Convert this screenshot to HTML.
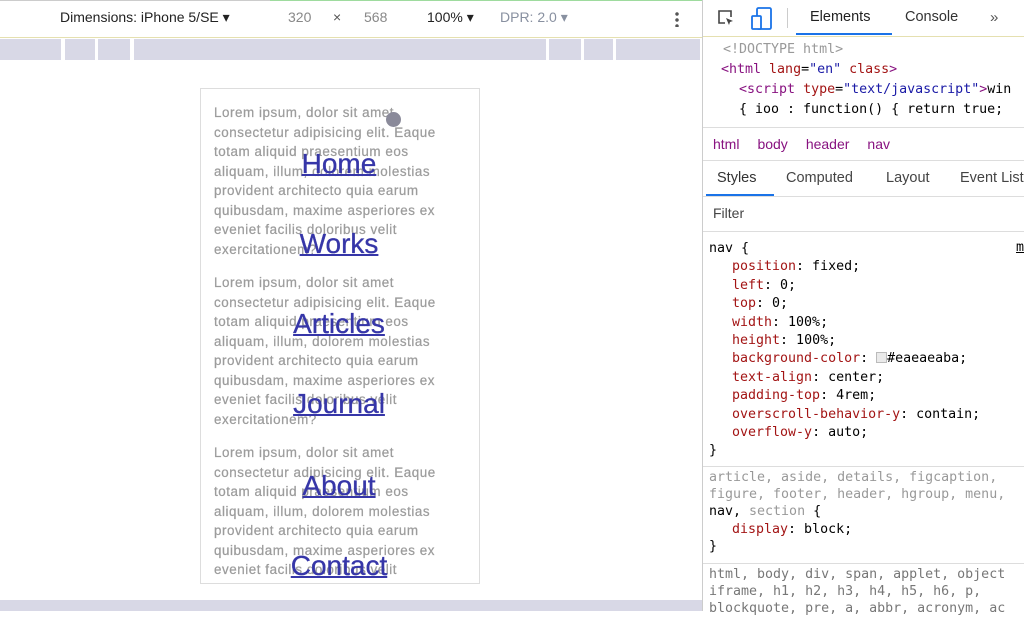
<!DOCTYPE html>
<html><head><meta charset="utf-8"><style>
*{margin:0;padding:0;box-sizing:border-box}
body{width:1024px;height:611px;overflow:hidden;background:#fff;font-family:"Liberation Sans",sans-serif;position:relative}
.abs{position:absolute}
.topline{left:0;top:0;width:702px;height:1px;background:#ccc}
.topline2{left:270px;top:0;width:432px;height:1px;background:#9edb9e}
.tb{top:9px;font-size:14px;color:#222;white-space:nowrap}
.ruler{top:39px;height:21px;background:#d8d8e6}
.frame{left:200px;top:88px;width:280px;height:496px;border:1px solid #ddd}
.lorem{position:absolute;left:13px;width:270px;font-size:13.4px;letter-spacing:0.55px;line-height:19.5px;color:#9c9c9c;white-space:nowrap;-webkit-text-stroke:0.25px #9c9c9c}
.nav a{position:absolute;left:0;width:678px;text-align:center;font-size:28px;color:#3636a8;text-decoration:underline;text-decoration-thickness:2px;line-height:32px;-webkit-text-stroke:0.3px #3636a8}
.dt{left:702px;top:0;width:322px;height:611px;border-left:1px solid #ccc;background:#fff}
.mono{font-family:"DejaVu Sans Mono","Liberation Mono",monospace;font-size:13.3px;white-space:nowrap}
.k{color:#a31515}.p{color:#881280}.v{color:#1a1aa6}.g{color:#999}
.hr{position:absolute;left:0;width:322px;height:1px;background:#ddd}
</style></head><body>
<div class="abs topline"></div><div class="abs topline2"></div>
<div class="abs tb" style="left:60px">Dimensions: iPhone 5/SE ▾</div>
<div class="abs tb" style="left:288px;color:#888">320</div>
<div class="abs tb" style="left:333px;color:#555">×</div>
<div class="abs tb" style="left:364px;color:#888">568</div>
<div class="abs tb" style="left:427px">100% ▾</div>
<div class="abs tb" style="left:500px;color:#8890a0">DPR: 2.0 ▾</div>
<div class="abs" style="left:675px;top:11px;width:4px;height:16px;background:radial-gradient(circle,#555 1.5px,transparent 2px) 0 0/4px 6px repeat-y"></div>
<div class="abs" style="left:0;top:37px;width:702px;height:1px;background:#e5e0b0"></div>
<div class="abs ruler" style="left:0;width:61px"></div>
<div class="abs ruler" style="left:65px;width:30px"></div>
<div class="abs ruler" style="left:98px;width:32px"></div>
<div class="abs ruler" style="left:134px;width:412px"></div>
<div class="abs ruler" style="left:549px;width:32px"></div>
<div class="abs ruler" style="left:584px;width:29px"></div>
<div class="abs ruler" style="left:616px;width:84px"></div>
<div class="abs" style="left:0;top:600px;width:702px;height:11px;background:#d8d8e6"></div>
<div class="abs frame">
<div class="lorem" style="top:14px">Lorem ipsum, dolor sit amet<br>consectetur adipisicing elit. Eaque<br>totam aliquid praesentium eos<br>aliquam, illum, dolorem molestias<br>provident architecto quia earum<br>quibusdam, maxime asperiores ex<br>eveniet facilis doloribus velit<br>exercitationem?</div>
<div class="lorem" style="top:184px">Lorem ipsum, dolor sit amet<br>consectetur adipisicing elit. Eaque<br>totam aliquid praesentium eos<br>aliquam, illum, dolorem molestias<br>provident architecto quia earum<br>quibusdam, maxime asperiores ex<br>eveniet facilis doloribus velit<br>exercitationem?</div>
<div class="lorem" style="top:354px">Lorem ipsum, dolor sit amet<br>consectetur adipisicing elit. Eaque<br>totam aliquid praesentium eos<br>aliquam, illum, dolorem molestias<br>provident architecto quia earum<br>quibusdam, maxime asperiores ex<br>eveniet facilis doloribus velit</div>
<div class="abs" style="left:185px;top:23px;width:15px;height:15px;border-radius:50%;background:#8a8a9a"></div>
</div>
<div class="nav">
<a style="top:148px">Home</a><a style="top:228px">Works</a><a style="top:308px">Articles</a><a style="top:388px">Journal</a><a style="top:470px">About</a><a style="top:550px">Contact</a>
</div>
<div class="abs dt">
<svg class="abs" style="left:14px;top:9px" width="18" height="18" viewBox="0 0 18 18"><path d="M8 14H2V2h12v6" fill="none" stroke="#444" stroke-width="1.6"/><path d="M9 9l7 3-3 1-1 3z" fill="#444"/></svg>
<svg class="abs" style="left:48px;top:7px" width="22" height="24" viewBox="0 0 22 24"><rect x="6" y="1" width="14" height="21" rx="1.5" fill="none" stroke="#1a73e8" stroke-width="1.8"/><rect x="1" y="9" width="9" height="13" rx="1" fill="#fff" stroke="#1a73e8" stroke-width="1.8"/></svg>
<div class="abs" style="left:84px;top:8px;width:1px;height:20px;background:#ccc"></div>
<div class="abs tb" style="left:107px;font-size:14.5px">Elements</div>
<div class="abs" style="left:93px;top:33px;width:96px;height:2px;background:#1a73e8"></div>
<div class="abs tb" style="left:202px;font-size:14.5px;color:#333">Console</div>
<div class="abs tb" style="left:287px;font-size:15px;color:#555">»</div>
<div class="hr" style="top:36px;background:#e5e0b0"></div>
<div class="abs mono" style="left:20px;top:40px;line-height:20px">
<div class="g">&lt;!DOCTYPE html&gt;</div>
<div style="margin-left:-2px"><span class="p">&lt;html</span> <span class="k">lang</span>=<span class="v">"en"</span> <span class="k">class</span><span class="p">&gt;</span></div>
<div style="margin-left:16px"><span class="p">&lt;script</span> <span class="k">type</span>=<span class="v">"text/javascript"</span><span class="p">&gt;</span>win</div>
<div style="margin-left:16px">{ ioo : function() { return true;</div>
</div>
<div class="abs" style="left:0;top:127px;width:322px;height:6px;background:#fff;border-top:1px solid #ddd"></div>
<div class="abs" style="left:10px;top:136px;font-size:14px;color:#881280;word-spacing:0"><span>html</span><span style="margin-left:18px">body</span><span style="margin-left:18px">header</span><span style="margin-left:18px">nav</span></div>
<div class="hr" style="top:160px"></div>
<div class="abs" style="left:14px;top:170px;font-size:14.5px;color:#333">Styles</div>
<div class="abs" style="left:83px;top:170px;font-size:14.5px;color:#444">Computed</div>
<div class="abs" style="left:183px;top:170px;font-size:14.5px;color:#444">Layout</div>
<div class="abs" style="left:257px;top:170px;font-size:14.5px;color:#444;white-space:nowrap">Event Listeners</div>
<div class="abs" style="left:3px;top:194px;width:68px;height:2px;background:#1a73e8"></div>
<div class="hr" style="top:196px"></div>
<div class="abs" style="left:10px;top:205px;font-size:14px;color:#444">Filter</div>
<div class="hr" style="top:231px"></div>
<div class="abs mono" style="left:6px;top:240px;line-height:18.4px">
<div>nav {</div>
<div style="margin-left:23px"><span class="k">position</span>: fixed;</div>
<div style="margin-left:23px"><span class="k">left</span>: 0;</div>
<div style="margin-left:23px"><span class="k">top</span>: 0;</div>
<div style="margin-left:23px"><span class="k">width</span>: 100%;</div>
<div style="margin-left:23px"><span class="k">height</span>: 100%;</div>
<div style="margin-left:23px"><span class="k">background-color</span>: <span style="display:inline-block;width:11px;height:11px;border:1px solid #bbb;background:#eaeaea;vertical-align:-1px"></span>#eaeaeaba;</div>
<div style="margin-left:23px"><span class="k">text-align</span>: center;</div>
<div style="margin-left:23px"><span class="k">padding-top</span>: 4rem;</div>
<div style="margin-left:23px"><span class="k">overscroll-behavior-y</span>: contain;</div>
<div style="margin-left:23px"><span class="k">overflow-y</span>: auto;</div>
<div>}</div>
</div>
<div class="abs mono" style="left:313px;top:240px;text-decoration:underline">m</div>
<div class="hr" style="top:466px"></div>
<div class="abs mono" style="left:6px;top:470px;line-height:16.8px">
<div class="g">article, aside, details, figcaption,</div>
<div class="g">figure, footer, header, hgroup, menu,</div>
<div>nav, <span class="g">section</span> {</div>
<div style="margin-left:23px;line-height:19px"><span class="k">display</span>: block;</div>
<div>}</div>
</div>
<div class="hr" style="top:563px"></div>
<div class="abs mono" style="left:6px;top:567px;line-height:16.8px;color:#777">
<div>html, body, div, span, applet, object</div>
<div>iframe, h1, h2, h3, h4, h5, h6, p,</div>
<div>blockquote, pre, a, abbr, acronym, ac</div>
</div>
</div>
</body></html>
